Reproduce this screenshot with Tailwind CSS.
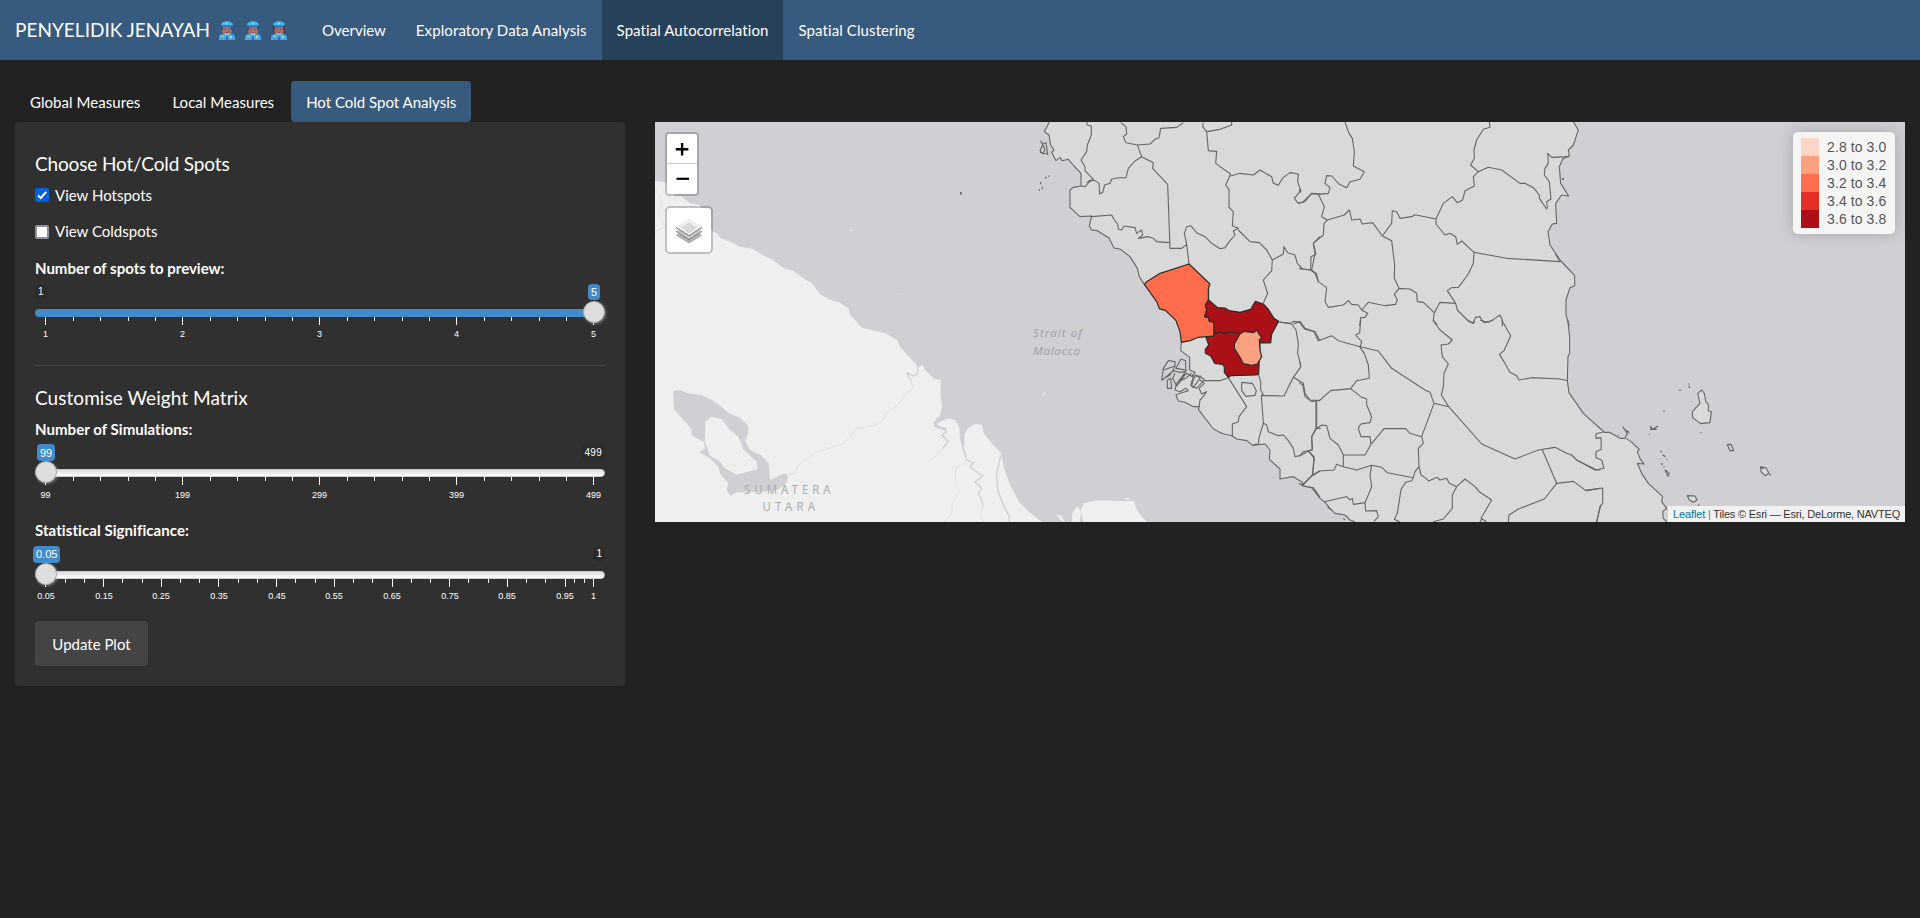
<!DOCTYPE html>
<html lang="en">
<head>
<meta charset="utf-8">
<title>Penyelidik Jenayah</title>
<script src="https://cdn.jsdelivr.net/npm/@tailwindcss/browser@4"></script>
</head>
<body class="bg-[#222222] h-[918px] overflow-hidden font-['Lato',sans-serif] text-[15px] leading-[21px] text-white">

<!-- shared symbols -->
<svg class="hidden">
  <symbol id="cop" viewBox="0 0 16 19">
    <path d="M3.200 6v4c0 3 2 5 4.800 5s4.800-2 4.800-5V6z" fill="#a86f66"/>
    <path d="M3 5h1.100v3.500H3zM11.900 5H13v3.500h-1.100z" fill="#5b3540"/>
    <path d="M0 19v-2.500C0 14 2 13 5 12.700l3 1.800 3-1.800c3 .3 5 1.300 5 3.800V19z" fill="#3fa9f5"/>
    <path d="M5.500 12.600 8 17l2.500-4.400z" fill="#8fd0fa"/><path d="M7.400 14h1.200l.6 5H6.800z" fill="#2a6fd0"/>
    <path d="M11 15h2v2h-2zM2.500 15h2.300v1H2.500z" fill="#f5d24e"/>
    <path d="M2.300 3.800C1.800 1.500 5 .2 8 .2s6.200 1.300 5.700 3.600L12.800 5.500H3.200z" fill="#42b4f8"/>
    <path d="M3.100 4.500h9.800v1.200H3.100z" fill="#2466a8"/><circle cx="8" cy="2.500" r="1" fill="#f5d24e"/>
    <path d="M5.200 7.600h1.500v.8H5.200zM9.300 7.600h1.500v.8H9.300z" fill="#74494a"/><path d="M6.700 11.200h2.600v.6H6.700z" fill="#84464a"/>
  </symbol>
</svg>

<nav class="flex h-[60px] items-stretch bg-[#375a7f]">
  <div class="flex w-[307px] items-center pl-[15px] text-[19px]">
    <span class="mb-[2px] w-[204px] whitespace-nowrap tracking-[0.03px]">PENYELIDIK JENAYAH</span>
    <span class="flex gap-[10px]">
      <svg class="h-[19px] w-[16px]"><use href="#cop"/></svg>
      <svg class="h-[19px] w-[16px]"><use href="#cop"/></svg>
      <svg class="h-[19px] w-[16px]" viewBox="0 0 16 19"><path d="M2 4h12v10H2z" fill="#56303f"/><use href="#cop" width="16" height="19"/></svg>
    </span>
  </div>
  <a class="flex items-center px-[15px]">Overview</a>
  <a class="flex items-center px-[15px] tracking-[0.1px]">Exploratory Data Analysis</a>
  <a class="flex items-center bg-[#28415b] px-[15px] tracking-[0.08px]">Spatial Autocorrelation</a>
  <a class="flex items-center px-[15px] tracking-[0.1px]">Spatial Clustering</a>
</nav>

<div class="mt-[21px] flex h-[41px] gap-[2px] px-[15px]">
  <a class="flex items-center rounded px-[15px] pt-[2px] tracking-[0.05px]">Global Measures</a>
  <a class="flex items-center rounded px-[15px] pt-[2px] tracking-[0.04px]">Local Measures</a>
  <a class="flex w-[180px] items-center rounded bg-[#375a7f] px-[15px] pt-[2px] whitespace-nowrap">Hot Cold Spot Analysis</a>
</div>

<main class="flex items-start gap-[30px] px-[15px]">
  <section class="h-[564px] w-[610px] rounded bg-[#303030] px-5 pt-[31px]">
    <h4 class="text-[19px] tracking-[-0.15px]">Choose Hot/Cold Spots</h4>
    <label class="mt-[10px] flex h-[21px]">
      <svg class="mt-[4px] mr-[6px] size-[14px]" viewBox="0 0 14 14"><rect width="14" height="14" rx="2" fill="#0060df"/><path d="M3 7.300 5.800 10 11.200 3.800" fill="none" stroke="#fff" stroke-width="2"/></svg>
      <span class="pt-px">View Hotspots</span>
    </label>
    <label class="mt-[15px] flex h-[21px]">
      <svg class="mt-[5px] mr-[6px] size-[14px]" viewBox="0 0 14 14"><rect x="1" y="1" width="12" height="12" rx="1" fill="#fff" stroke="#8f8f9d" stroke-width="2"/></svg>
      <span class="pt-px">View Coldspots</span>
    </label>
    <div class="mt-[17px] h-[21px] font-bold">Number of spots to preview:</div>

    <div class="relative mt-[5px] h-[61px] font-['Liberation_Sans',sans-serif] text-[10px] leading-[15px]">
      <div class="flex h-[25px] justify-between">
        <span class="h-[15px] rounded bg-[#2b2b2b] px-[3px]">1</span>
        <span class="mr-[5px] h-[16px] rounded bg-[#428bca] px-[3px] text-[11px] leading-[17px]">5</span>
      </div>
      <div class="h-2 rounded-full bg-[#428bca]"></div>
      <svg class="h-[28px] w-[570px]" font-size="9" fill="#fff" text-anchor="middle">
        <path stroke="#fff" d="M10.500 0v8M38.500 0v4M65.500 0v4M93.500 0v4M120.500 0v4M147.500 0v8M175.500 0v4M202.500 0v4M230.500 0v4M257.500 0v4M284.500 0v8M312.500 0v4M339.500 0v4M367.500 0v4M394.500 0v4M421.500 0v8M449.500 0v4M476.500 0v4M504.500 0v4M531.500 0v4M558.500 0v8"/>
        <text x="10.500" y="20">1</text><text x="147.500" y="20">2</text><text x="284.500" y="20">3</text><text x="421.500" y="20">4</text><text x="558.500" y="20">5</text>
      </svg>
      <span class="absolute top-[17px] right-0 size-[22px] rounded-full border border-[#aaa] bg-[#dedede] shadow-[1px_1px_3px_rgba(255,255,255,0.3)]"></span>
    </div>

    <hr class="mt-[20px] border-[#464646]">
    <h4 class="mt-[21px] text-[19px] tracking-[0.05px]">Customise Weight Matrix</h4>
    <div class="mt-[11px] h-[21px] font-bold tracking-[0.05px]">Number of Simulations:</div>

    <div class="relative mt-[4px] h-[61px] font-['Liberation_Sans',sans-serif] text-[10px] leading-[16px]">
      <div class="flex h-[25px] justify-between">
        <span class="ml-[2px] h-[17px] rounded bg-[#428bca] px-[3px] text-[11px] leading-[18px]">99</span>
        <span class="h-[16px] rounded bg-[#2b2b2b] px-[3px] leading-[17px] tracking-[0.3px]">499</span>
      </div>
      <div class="h-2 rounded-full border border-[#ccc] bg-linear-to-b from-[#dddddd] to-white"></div>
      <svg class="h-[28px] w-[570px]" font-size="9" fill="#fff" text-anchor="middle">
        <path stroke="#fff" d="M10.500 0v8M38.500 0v4M65.500 0v4M93.500 0v4M120.500 0v4M147.500 0v8M175.500 0v4M202.500 0v4M230.500 0v4M257.500 0v4M284.500 0v8M312.500 0v4M339.500 0v4M367.500 0v4M394.500 0v4M421.500 0v8M449.500 0v4M476.500 0v4M504.500 0v4M531.500 0v4M558.500 0v8"/>
        <text x="10.500" y="21">99</text><text x="147.500" y="21">199</text><text x="284.500" y="21">299</text><text x="421.500" y="21">399</text><text x="558.500" y="21">499</text>
      </svg>
      <span class="absolute top-[17px] left-0 size-[22px] rounded-full border border-[#aaa] bg-[#dedede] shadow-[1px_1px_3px_rgba(255,255,255,0.3)]"></span>
    </div>

    <div class="mt-[15px] h-[21px] font-bold tracking-[0.07px]">Statistical Significance:</div>

    <div class="relative mt-[5px] h-[61px] font-['Liberation_Sans',sans-serif] text-[10px] leading-[15px]">
      <div class="flex h-[25px] justify-between">
        <span class="-ml-[2px] h-[17px] rounded bg-[#428bca] px-[3px] text-[11px] leading-[17px]">0.05</span>
        <span class="h-[15px] rounded bg-[#2b2b2b] px-[3px]">1</span>
      </div>
      <div class="h-2 rounded-full border border-[#ccc] bg-linear-to-b from-[#dddddd] to-white"></div>
      <svg class="h-[28px] w-[570px]" font-size="9" fill="#fff" text-anchor="middle">
        <path stroke="#fff" d="M10.500 0v8M30.500 0v4M49.500 0v4M68.500 0v8M87.500 0v4M107.500 0v4M126.500 0v8M145.500 0v4M164.500 0v4M183.500 0v8M203.500 0v4M222.500 0v4M241.500 0v8M260.500 0v4M280.500 0v4M299.500 0v8M318.500 0v4M337.500 0v4M357.500 0v8M376.500 0v4M395.500 0v4M414.500 0v8M433.500 0v4M453.500 0v4M472.500 0v8M491.500 0v4M510.500 0v4M530.500 0v8M539.500 0v4M549.500 0v4M558.500 0v8"/>
        <text x="11" y="20">0.05</text><text x="69" y="20">0.15</text><text x="126" y="20">0.25</text><text x="184" y="20">0.35</text><text x="242" y="20">0.45</text><text x="299" y="20">0.55</text><text x="357" y="20">0.65</text><text x="415" y="20">0.75</text><text x="472" y="20">0.85</text><text x="530" y="20">0.95</text><text x="558.500" y="20">1</text>
      </svg>
      <span class="absolute top-[17px] left-0 size-[22px] rounded-full border border-[#aaa] bg-[#dedede] shadow-[1px_1px_3px_rgba(255,255,255,0.3)]"></span>
    </div>

    <button class="mt-[14px] h-[45px] w-[113px] rounded bg-[#444444] pt-px">Update Plot</button>
  </section>

  <section class="relative h-[400px] w-[1250px] overflow-hidden bg-[#d0cfd4] font-['Liberation_Sans',sans-serif]">
    <svg class="block h-[400px] w-[1250px]" viewBox="655 122 1250 400" fill="none" stroke-linejoin="round">
      <!-- Sumatra -->
      <g transform="translate(650 120) scale(.333333)">
        <path fill="#efefef" d="M15 183 45 187 75 228 95 230 120 250 150 256 186 334 200 340 212 354 240 365 270 380 308 386 345 410 365 417 400 444 430 453 465 478 485 490 510 522 535 538 570 548 596 566 598 580 635 623 705 640 742 660 750 680 800 735 803 742 818 735 825 750 850 774 866 780 872 778 872 830 876 860 868 892 850 908 853 915 870 905 895 895 915 900 928 920 930 955 942 1000 950 1018 942 985 943 945 953 925 975 912 997 914 1001 940 1025 970 1053 998 1062 1045 1080 1095 1110 1150 1145 1185 1176 1206H15z"/>
        <path fill="#d0cfd4" d="M70 813 90 810 110 819 155 826 190 842 215 860 235 880 270 893 293 915 295 938 285 962 300 990 335 1007 356 1030 360 1080 405 1060 414 1067 410 1090 385 1108 340 1115 260 1117 240 1127 230 1110 235 1090 210 1060 205 1040 177 1012 148 998 165 985 162 965 125 948 125 928 72 868z"/>
        <path fill="#efefef" d="M166 905 183 890 215 898 240 930 265 950 280 988 320 1025 322 1048 260 1064 225 1045 205 1020 180 1008 165 965z"/>
        <g stroke="#d0cfd4" stroke-width="4">
          <path stroke-width="8" d="M866 892 856 918 888 928"/>
          <path d="M803 735V762L790 768 772 758 775 772 784 780M880 926 890 935 875 945 895 965 878 985M936 940 938 980 950 1018 970 1030 960 1040 985 1060 1000 1068 975 1085 995 1105 985 1120 1000 1155M1053 1005 1040 1060 1043 1110 1060 1155 1078 1190V1206"/>
        </g>
        <g stroke="#e2e2e4" stroke-width="3">
          <path d="M784 780 788 805 770 820 738 860 705 880 700 900 680 914 620 926 580 970 500 997 445 1035 435 1060 414 1062M950 1022 918 1045 916 1090 930 1110 908 1145 905 1185 880 1206M875 988 845 1020 832 1024M1000 1155 990 1185 1002 1206M15 210 30 225 35 250 25 285 45 320 15 338M60 225v15M76 225v20M95 240l15 10"/>
          <path d="M598 331h10M745 523h6M1180 820v6M1186 817v5"/>
        </g>
        <path fill="#777" d="M930 216h6v8h-6z"/>
      </g>
      <g transform="translate(1020 320) scale(.333333)" fill="#efefef">
        <path d="M0 550 30 578 65 606H0zM155 606 157 580 172 558 183 575 180 606zM190 606 182 570 192 550 230 541 315 543 343 544 348 565 365 590 382 606zM110 582 125 588 135 606 120 600zM308 535 330 534 325 541z"/>
        <path d="M68 218h3v8h-3zM75 215h3v8h-3z"/>
      </g>

      <!-- Peninsula land -->
      <g fill="#d9d9d9">
        <path transform="translate(1020 120) scale(.333333)" d="M88 6 73 35 87 45 92 75 102 90 95 105 108 122 145 118 162 138 183 160V198L150 210V262L180 290 215 288 210 320 232 332 267 354 282 384 302 388 330 410 352 445 358 470 373 493 410 545 420 567 437 572 472 615H900V6z"/>
        <path transform="translate(1020 320) scale(.333333)" d="M468 0 480 35 484 67 482 92 509 112V150L520 158 468 205 475 243 495 247 520 260H537L580 327 605 340 637 348 650 357 680 362 698 376 735 372 750 390 748 415 780 447V477L820 470 847 487 848 497 880 503 900 532V0z"/>
        <path transform="translate(1300 120) scale(.333333)" d="M-3 6H820L835 30 825 65 805 90 808 107 788 117 778 140 782 190 806 228 785 225 767 250 770 310 757 312 744 335 750 375 780 420 824 467V497L810 503 798 540V585L808 618H-3z"/>
        <path transform="translate(1300 320) scale(.333333)" d="M-3 0H803L809 50V100L802 182 807 218 850 280 902 327V606H165L135 585 105 580 75 547 60 535 35 503 10 498-3 490z"/>
        <path transform="translate(1550 120) scale(.333333)" d="M148 924 162 935 178 937 210 955 230 945 235 960 262 988 270 1015 262 1035 275 1060 295 1090 338 1130 335 1145 350 1165 338 1190 350 1206H148z"/>
      </g>

      <!-- District boundaries -->
      <g stroke="#666" stroke-width="3.300">
        <g transform="translate(1020 120) scale(.333333)">
          <path d="M88 6 73 35 87 45 92 75 102 90 95 97 108 122 120 113 126 122 145 118 162 138 183 160V198L160 202 150 210V262L180 290 215 288 208 318 215 330 232 332 267 354 282 384 302 388 330 410 352 445 358 470 373 493"/>
          <path d="M200 6 202 15 214 18V45L202 75 200 95 183 120 195 140 195 152 220 178 208 186 195 200 183 198M200 188 212 180 225 182 237 190 239 222 248 217 254 195 270 190 275 178 290 174 318 173 325 145 345 123 365 110 352 75 318 68 310 50 320 42 318 20 302 8M352 75 390 72 405 58 417 53 422 25 470 22 490 8M365 110 400 128 398 145 443 193 450 385 485 385 500 373 493 340 500 320 512 317 530 338 555 350 575 370 600 386 615 383 630 362 645 345 640 333 655 325 637 317 640 275 627 262 627 208 617 195 632 162 600 140 587 130 590 94 565 92 560 35 548 20 550 8M560 35 600 28 635 15V6M632 168 660 160 700 165 720 150 755 170 760 190 775 196 790 172 810 158 835 162 833 185 842 212 823 235 835 250 850 245 875 220 902 222M215 290 275 285 283 300 293 312 295 328 305 330 312 318 345 323 350 340 365 330 368 345 355 355 385 350 400 355 410 365 449 368M500 373 507 432M655 330 690 365 718 368 740 390 757 420 755 452 730 480 743 520 730 550M757 420 790 402 792 380 803 398 825 405 832 430 848 447 875 450 885 400 880 370 900 350M875 450 890 462 895 485M566 540V493M775 606 812 610 820 604 840 606 845 615"/>
          <path d="M62 62 68 75 60 92 68 102 75 90 68 72 78 68 83 103 60 97M75 175l5-3M85 170l3-3M62 185v8M67 200v8M58 208v5"/>
        </g>
        <g transform="translate(1020 320) scale(.333333)">
          <path d="M484 67 482 92 509 112V150L525 157 515 170 530 165 540 175 520 203 512 195 520 172 500 160 470 190 465 210 480 215 498 205 505 212 480 220 468 225 475 243 495 247 520 260H537L535 268 580 327 605 340 637 348 650 357 680 362 698 376 735 372 750 390 748 418 780 447V477L820 470 847 487 848 497 880 503 900 532"/>
          <path d="M465 125 445 122 430 145 425 180 450 165 465 140zM497 122 483 117 468 145 497 150zM430 150 465 138M425 182 450 160 462 152 478 157 495 155 490 172 470 198 458 175 465 160M442 180 452 175 455 205 442 205zM500 150 475 185 497 175 515 160M522 172 515 198 530 205 553 180 540 168zM540 180 553 190 537 205 545 222 560 215 548 232 540 240 537 262M553 182 600 182 625 173 680 260 657 290 655 305 637 312 637 348"/>
          <path d="M665 187 697 190 709 212 705 226 678 229 665 212zM715 160 722 185 722 210 731 226 724 226 730 310 718 350 715 372 700 374M724 226 792 228 820 172 843 140 833 100 835 70 828 30 815 12 780 6M820 12 840 5 855 25 885 35 900 62M820 172 850 190 855 220 870 240 900 242M888 243V325L875 350 877 390 865 393 845 405 825 410 820 385 805 362 790 345 775 347 745 335 740 315 730 310M865 393 883 415 877 465 848 495M877 465 900 452M888 325H902"/>
        </g>
        <g transform="translate(1300 120) scale(.333333)">
          <path d="M820 6 835 30 820 75 805 90 808 107 788 117 778 140 782 190 806 228 785 225 767 250 770 310 757 312 744 335 750 375 780 420 824 467V497L810 503 798 540V585L808 618"/>
          <path d="M135 6 147 40 157 55 163 95 160 138 193 155 180 178 150 185 140 203 118 193 95 168 80 167 75 190 90 203 85 220 55 223 35 220 15 245-3 250M55 223 73 260 65 290 82 300 133 285 148 270 155 300 180 297 187 312 218 308 247 348 275 310 277 272 290 275 300 295 335 290 345 284 408 297 430 250 457 230 472 248 488 240 495 212 523 198 520 170 535 155 512 135 523 115 522 90 530 60 550 28 570 22 568 6M535 155 565 142 605 150 660 190 675 190 700 203 718 225V235L740 267 742 262 740 245 753 237 748 185 733 165 735 145 745 130 743 100 755 112 808 110M82 300 72 310 70 345 40 370 48 403 33 410 32 450 45 460 55 485 80 503 75 545 85 562 130 555 145 542 155 553 175 555 185 570 205 547 255 557 287 553 292 540 283 523 297 505 330 507 350 520 352 545 370 547 403 578 420 547 467 550 442 512 455 503 475 502 505 462 520 430 522 397 485 363 472 373 467 350 450 340 435 345 408 312V297M247 348 275 362 284 435 283 475 297 505M522 397 620 415 780 425 765 400M467 550 472 570 505 603 518 610 527 592 540 590 550 607 570 605 600 585 607 600 607 618M403 578 400 600 412 615M185 570 203 580 195 592 182 593 179 618M-3 446 32 450"/>
          <path fill="#666" d="M-1 208h3v8h-3zM787 176h3v2h-3z"/>
        </g>
        <g transform="translate(1300 320) scale(.333333)">
          <path d="M803 0 809 50V100L804 110 802 182 807 218 850 280 902 327M-3 5 15 28 42 35 55 62 95 47 115 62 180 80 235 93 275 145 375 210 390 217 402 250 446 260 545 372 645 417 715 390 765 382 800 400 815 405 830 420 890 450H902M182 0 179 38 167 45 185 65 180 82 193 100 205 135 208 175 170 182 152 206 92 212 60 240 35 245 15 230 8 195-3 187M50 243V325L35 350 37 388 25 393 42 410 38 465 8 495M152 206 185 232 200 237V255L215 290 210 308 182 312 175 325 183 350 210 350 213 373 195 405H130L115 375 90 355 80 317 65 315 50 325M213 373 252 326H317L330 340 365 350 402 250M130 405V440L110 433 102 450 60 453 38 467M130 440 170 450 215 436 245 442 262 458 340 473 345 455 357 440 355 385 370 370 365 350M215 436 210 465 215 500 195 548 197 573 230 572 235 590 222 604M195 548 160 553 157 535 150 540 140 530 72 545M340 473 335 482 317 487 303 508 292 580 283 598 300 606M357 440 363 465 378 475 385 483 412 472 420 480 440 475 448 490 470 500 495 477 525 500 540 517 575 540 543 595 560 606M470 500 457 525V565L430 597 400 605M545 597 540 606M727 390 770 490 820 484 858 512 900 505M770 490 733 537 655 567 627 585 625 606M398 0 420 30 457 60 445 72 423 75 427 110 445 132 432 160 430 200 424 225 446 260M502 0 520 10 525 3M540 0 560 7 580 0M605 0 632 47 612 92 598 103 612 125 630 157 650 167 657 180 695 173 780 177 802 182M-3 410 10 395 35 390M-3 490 10 498 35 503 60 535 75 547 90 565 105 580 135 585 150 600 165 605M83 560 92 570M130 596l5 4M1 125v14M902 555 890 606"/>
        </g>
        <g transform="translate(1550 120) scale(.333333)">
          <path d="M150 925 162 935 138 941V955L153 953 154 988 138 995V1013L155 1020 162 1045 135 1050 80 1020M162 937 178 937 210 955 225 955 232 940 218 920M228 955 243 965 268 988 262 995 270 1015 282 1032 262 1030 275 1060 295 1090 338 1130 335 1145 350 1165 338 1175 340 1195 350 1206M108 1111 158 1104V1150L150 1160 140 1206"/>
          <path fill="#d9d9d9" d="M455 810 443 820 450 850 427 875 428 893 452 911 480 908 484 875 475 872 475 853 467 845 463 820zM532 974 543 973 551 992 540 992zM632 1040 648 1043 657 1060 645 1067 633 1055zM412 1127 435 1128 441 1140 430 1147 418 1140zM345 1050 358 1060 354 1069z"/>
          <path stroke-width="4" d="M388 810h4M415 792h3M418 798v6M340 873h4M452 938h3M39 177h3M300 918 308 928 325 918M300 928 320 928M296 943h3M331 995h5M338 1005l8 5M349 1018h3M333 1032h5M340 1040h4M630 1042l12 4M658 1062l5 4M444 1155h4M204 944l2 2M228 930l10 8"/>
        </g>
      </g>

      <!-- Hotspots -->
      <g stroke="#2b2b2b" stroke-width="3.500">
        <g transform="translate(1020 120) scale(.333333)">
          <path fill="#ff6d4c" d="M373 493 380 485 418 461 507 432 570 492 565 505V540L556 555 560 570 554 590 566 592 568 604 582 606V648L560 650 535 652 510 662 484 667 480 635 468 602 437 572 418 566 410 545z"/>
          <path fill="#ac1017" d="M566 540 593 563 615 564 628 572 660 577 692 568 706 544 730 552 745 568 762 595 776 604 755 643 752 669 720 668 716 761 710 765 632 767 625 772 613 757V740L607 733 584 730 572 708 556 700V688L566 675 558 652 582 648V606L568 604 566 592 554 590 560 570 556 555z"/>
          <path d="M582 640 600 636 615 640 628 636 660 640"/>
          <path fill="#fca082" d="M660 642 672 634 700 638 712 630 715 640 725 652 718 660 720 690 725 710 712 732 695 736 670 731 660 712 643 685V672z"/>
        </g>
      </g>

      <!-- Place names -->
      <g font-family="Noto Sans, sans-serif" fill="#a2a2a6">
        <g font-size="11.500" font-style="italic">
          <text x="1033" y="337" textLength="49">Strait of</text>
          <text x="1033" y="355" textLength="47">Malacca</text>
        </g>
        <g font-size="13.500" fill="#adadad">
          <text transform="translate(744 494) scale(.85 1)" textLength="102">SUMATERA</text>
          <text transform="translate(762.500 511) scale(.85 1)" textLength="62">UTARA</text>
        </g>
      </g>
    </svg>

    <div class="absolute top-[10px] left-[10px] flex flex-col rounded border-2 border-black/20 bg-clip-padding">
      <a class="h-[30px] w-[30px] rounded-t-[2px] border-b border-[#ccc] bg-white"><svg class="size-[29px]" stroke="#000" stroke-width="2.400"><path d="M8.800 15.200h12.600M15.100 9v12.400"/></svg></a>
      <a class="h-[30px] w-[30px] rounded-b-[2px] bg-white"><svg class="size-[30px]" stroke="#000" stroke-width="2.200"><path d="M9.500 14.800h12.500"/></svg></a>
    </div>

    <div class="absolute top-[84px] left-[10px] rounded-[5px] border-2 border-black/20 bg-white bg-clip-padding">
      <svg class="block size-[44px]" viewBox="0 0 44 44">
        <path d="M9 27 22 35 35 27 22 19z" fill="#b4b4b4"/><path d="M9 27 22 35 35 27" fill="none" stroke="#999" stroke-width=".8"/>
        <path d="M9 23.300 22 31.500 35 23.300 22 15z" fill="#c8c8c8"/><path d="M9 23.300 22 31.500 35 23.300" fill="none" stroke="#777" stroke-width=".9"/>
        <path d="M9 19.500 22 27.700 35 19.500 22 11z" fill="#f0f0f0" stroke="#ddd" stroke-width=".5"/><path d="M14 19.500 22 25.500 30 19.500 22 14.500z" fill="#d8d8d8"/><path d="M9 19.500 22 27.700 35 19.500" fill="none" stroke="#777" stroke-width="1"/>
      </svg>
    </div>

    <div class="absolute top-[10px] right-[10px] h-[102px] w-[102px] rounded-[5px] bg-[#f5f5f5] px-2 py-[6px] text-[14px] leading-[18px] tracking-[0.1px] text-[#555] shadow-[0_0_15px_rgba(0,0,0,0.2)]">
      <div class="flex gap-2"><i class="size-[18px] bg-[#fdd6c8]"></i><span>2.8 to 3.0</span></div>
      <div class="flex gap-2"><i class="size-[18px] bg-[#fca082]"></i><span>3.0 to 3.2</span></div>
      <div class="flex gap-2"><i class="size-[18px] bg-[#ff6d4c]"></i><span>3.2 to 3.4</span></div>
      <div class="flex gap-2"><i class="size-[18px] bg-[#e32f27]"></i><span>3.4 to 3.6</span></div>
      <div class="flex gap-2"><i class="size-[18px] bg-[#ac1017]"></i><span>3.6 to 3.8</span></div>
    </div>

    <div class="absolute right-0 bottom-0 flex h-[16px] w-[237px] justify-between bg-white/70 px-[5px] text-[11px] leading-[16px] whitespace-pre text-[#333]"><span class="tracking-[-0.1px] text-[#0078a8]">Leaflet</span><span class="text-[#777]">|</span><span class="tracking-[-0.2px]">Tiles © Esri — Esri, DeLorme, NAVTEQ</span></div>
  </section>
</main>
</body>
</html>
